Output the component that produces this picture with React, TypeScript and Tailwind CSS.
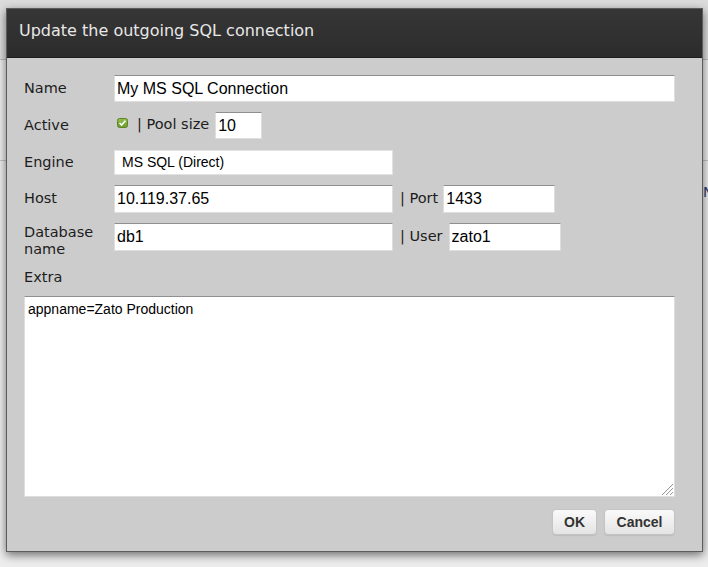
import React from 'react';

const label = "text-[14.5px] text-[#1c1c1c] [font-family:'DejaVu_Sans',sans-serif]";
const field =
  "bg-white border border-[#dedede] border-t-[#8f8f8f] px-[2px] text-[16px] text-black [font-family:'Liberation_Sans',Arial,sans-serif] outline-none";

function CheckIcon() {
  return (
    <svg width="11" height="10" viewBox="0 0 11 10">
      <defs>
        <linearGradient id="cb" x1="0" y1="0" x2="0" y2="1">
          <stop offset="0" stopColor="#94bf4e" />
          <stop offset="1" stopColor="#6a9a2c" />
        </linearGradient>
      </defs>
      <rect x="0.5" y="0.5" width="10" height="9" rx="2" fill="url(#cb)" stroke="#5d8526" />
      <path d="M2.6 5 L4.6 7 L8.4 2.8" fill="none" stroke="#fff" strokeWidth="1.6" />
    </svg>
  );
}

function Grip() {
  return (
    <svg width="14" height="14" viewBox="0 0 14 14" className="absolute right-[1px] bottom-[1px]">
      <path d="M13 2 L2 13 M13 6 L6 13 M13 10 L10 13" stroke="#9a9a9a" strokeWidth="1" />
      <path d="M13 3 L3 13 M13 7 L7 13 M13 11 L11 13" stroke="#f4f4f4" strokeWidth="1" />
    </svg>
  );
}

export default function App() {
  return (
    <div className="relative w-[708px] h-[567px] overflow-hidden bg-[#ededed]">
      {/* page behind the modal */}
      <div className="h-[60px] bg-[#dcdcdc] border-b border-[#bdbdbd]" />
      <div className="mt-[100px] border-t border-[#c4c4c4] pl-[703px] pt-[21px] text-[14px] text-[#2c3e6b] [font-family:'DejaVu_Sans',sans-serif] whitespace-nowrap">
        N
      </div>

      {/* modal */}
      <div className="absolute left-[6px] top-[8px] w-[697px] h-[544px] border border-[#5c5c5c] bg-[#cccccc] shadow-[0_3px_9px_rgba(0,0,0,0.55)] flex flex-col">
        <div className="h-[49px] shrink-0 bg-gradient-to-b from-[#363636] to-[#2c2c2c] border-b border-[#1e1e1e] pl-[12px] pt-[12px]">
          <div className="text-[16px] leading-[20px] text-[#e8e8e8] [font-family:'DejaVu_Sans',sans-serif]">
            Update the outgoing SQL connection
          </div>
        </div>

        <div className="flex flex-col pl-[17px] pr-[27px] pt-[17px]">
          {/* Name */}
          <div className="flex items-center h-[27px]">
            <div className={`${label} w-[90px]`}>Name</div>
            <input readOnly value="My MS SQL Connection" className={`${field} w-[561px] h-[27px]`} />
          </div>

          {/* Active */}
          <div className="flex items-center h-[27px] mt-[10px]">
            <div className={`${label} w-[90px]`}>Active</div>
            <div className="ml-[3px] mt-[-5px] flex">
              <CheckIcon />
            </div>
            <div className={`${label} ml-[9px] mt-[-2px]`}>| Pool size</div>
            <input readOnly value="10" className={`${field} ml-[6px] w-[47px] h-[27px]`} />
          </div>

          {/* Engine */}
          <div className="flex items-center h-[25px] mt-[11px]">
            <div className={`${label} w-[90px]`}>Engine</div>
            <div className="w-[279px] h-[25px] bg-white border border-[#e2e2e2] pl-[7px] flex items-center text-[14px] text-black [font-family:'Liberation_Sans',Arial,sans-serif]">
              MS SQL (Direct)
            </div>
          </div>

          {/* Host / Port */}
          <div className="flex items-center h-[28px] mt-[10px]">
            <div className={`${label} w-[90px]`}>Host</div>
            <input readOnly value="10.119.37.65" className={`${field} w-[279px] h-[28px]`} />
            <div className={`${label} ml-[7px]`}>| Port</div>
            <input readOnly value="1433" className={`${field} ml-[5px] w-[112px] h-[28px]`} />
          </div>

          {/* Database / User */}
          <div className="flex items-start h-[28px] mt-[10px]">
            <div className={`${label} w-[90px] leading-[17px] pt-[1px]`}>
              Database
              <br />
              name
            </div>
            <input readOnly value="db1" className={`${field} w-[279px] h-[28px]`} />
            <div className={`${label} ml-[7px] h-[28px] flex items-center`}>| User</div>
            <input readOnly value="zato1" className={`${field} ml-[6px] w-[112px] h-[28px]`} />
          </div>

          {/* Extra */}
          <div className="flex items-center h-[28px] mt-[13px]">
            <div className={label}>Extra</div>
          </div>
          <div className="relative mt-[4px] w-[651px] h-[201px]">
            <textarea
              readOnly
              value="appname=Zato Production"
              className="w-full h-full resize-none bg-white border border-[#dedede] border-t-[#8f8f8f] px-[3px] pt-[4px] text-[14px] leading-[16px] text-black [font-family:'Liberation_Sans',Arial,sans-serif] outline-none"
            />
            <Grip />
          </div>

          {/* Buttons */}
          <div className="flex justify-end gap-[7px] mt-[12px]">
            <button className="w-[45px] h-[26px] rounded-[4px] border border-[#c4c4c4] bg-gradient-to-b from-[#fafafa] to-[#e4e4e4] text-[14px] font-bold text-[#333] [font-family:'Liberation_Sans',Arial,sans-serif] shadow-[0_1px_1px_rgba(0,0,0,0.08)]">
              OK
            </button>
            <button className="w-[71px] h-[26px] rounded-[4px] border border-[#c4c4c4] bg-gradient-to-b from-[#fafafa] to-[#e4e4e4] text-[14px] font-bold text-[#333] [font-family:'Liberation_Sans',Arial,sans-serif] shadow-[0_1px_1px_rgba(0,0,0,0.08)]">
              Cancel
            </button>
          </div>
        </div>
      </div>
    </div>
  );
}
